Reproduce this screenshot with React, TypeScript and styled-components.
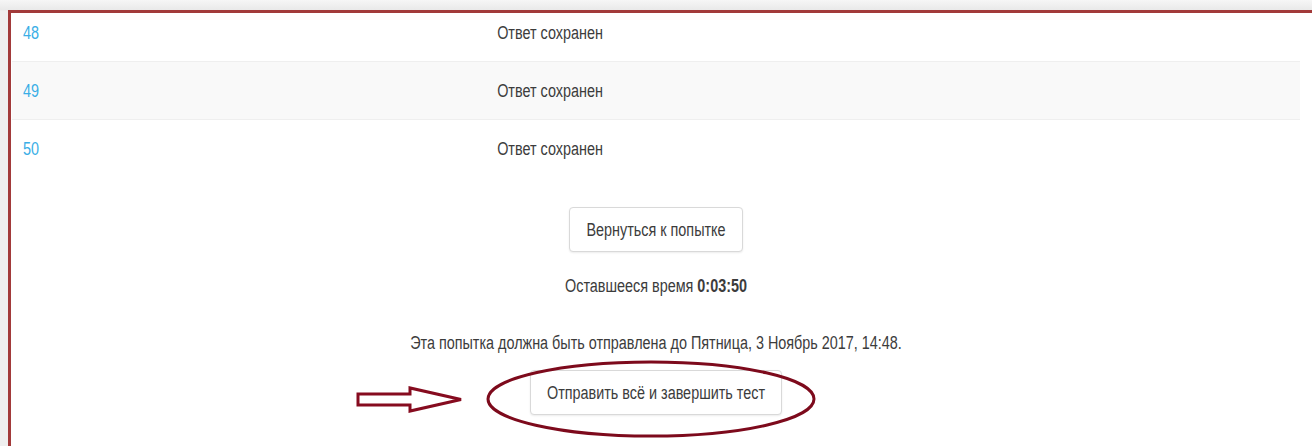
import React from 'react';
import styled, { createGlobalStyle } from 'styled-components';

const GlobalStyle = createGlobalStyle`
  html, body {
    margin: 0;
    padding: 0;
    background: #efefef;
    overflow: hidden;
  }
  body {
    font-family: 'Liberation Sans', Arial, sans-serif;
    font-size: 14.4px;
    color: #3c3c3c;
  }
`;

const Page = styled.div`
  position: relative;
  width: 1312px;
  height: 446px;
  background: linear-gradient(#f6f6f6, #e9e9e9 10px, #efefef 11px);
  overflow: hidden;
`;

const Frame = styled.div`
  margin: 10px 0 0 8px;
  height: 436px;
  background: #ffffff;
  border-top: 3px solid #a23a3a;
  border-left: 3px solid #a23a3a;
  overflow: hidden;
`;

const Content = styled.div`
  width: 1288px;
  padding-left: 1px;
`;

// the font is drawn tall and narrow
const Tall = styled.span`
  display: inline-block;
  transform: scaleY(1.26);
`;

const Table = styled.div`
  margin-top: -9px;
`;

const Row = styled.div<{ $striped?: boolean }>`
  display: grid;
  grid-template-columns: 300px 476px 1fr;
  align-items: center;
  height: 58px;
  background: ${(p) => (p.$striped ? '#f9f9f9' : '#ffffff')};
  border-bottom: 1px solid #efefef;
  box-sizing: border-box;

  &:last-child {
    border-bottom: none;
  }
`;

const Num = styled.a`
  padding-left: 11px;
  color: #3aaee6;
  text-decoration: none;
`;

const Status = styled.span`
  text-align: center;
  color: #3c3c3c;
`;

const Actions = styled.div`
  display: flex;
  flex-direction: column;
  align-items: center;
  padding-top: 29px;
`;

const Button = styled.button<{ $gap?: number }>`
  margin-top: ${(p) => p.$gap ?? 0}px;
  height: 45px;
  padding: 0 16px;
  background: #ffffff;
  border: 1px solid #d9d9d9;
  border-radius: 4px;
  box-shadow: 0 1px 2px rgba(0, 0, 0, 0.08);
  font-family: inherit;
  font-size: inherit;
  color: #3c3c3c;
  white-space: nowrap;
`;

const Note = styled.div<{ $gap: number }>`
  margin-top: ${(p) => p.$gap}px;
  line-height: 20px;
  color: #3c3c3c;
`;

const Overlay = styled.svg`
  position: absolute;
  left: 0;
  top: 0;
  pointer-events: none;
`;

const rows = [
  { n: 48, striped: false },
  { n: 49, striped: true },
  { n: 50, striped: false },
];

export default function App() {
  return (
    <>
      <GlobalStyle />
      <Page>
        <Frame>
          <Content>
            <Table>
              {rows.map((r) => (
                <Row key={r.n} $striped={r.striped}>
                  <Num href="#">
                    <Tall>{r.n}</Tall>
                  </Num>
                  <Status>
                    <Tall>Ответ сохранен</Tall>
                  </Status>
                  <span />
                </Row>
              ))}
            </Table>
            <Actions>
              <Button>
                <Tall>Вернуться к попытке</Tall>
              </Button>
              <Note $gap={24}>
                <Tall>
                  Оставшееся время <b>0:03:50</b>
                </Tall>
              </Note>
              <Note $gap={37}>
                <Tall>Эта попытка должна быть отправлена до Пятница, 3 Ноябрь 2017, 14:48.</Tall>
              </Note>
              <Button $gap={17}>
                <Tall>Отправить всё и завершить тест</Tall>
              </Button>
            </Actions>
          </Content>
        </Frame>
        <Overlay width="1312" height="446" viewBox="0 0 1312 446">
          {/* hollow arrow pointing at the submit button */}
          <polygon
            points="358,394 410,394 410,388 461,399.5 410,411 410,405 358,405"
            fill="#ffffff"
            stroke="#860b1f"
            strokeWidth="3"
            strokeLinejoin="miter"
          />
          {/* circle marking the submit button */}
          <ellipse
            cx="651"
            cy="399"
            rx="163"
            ry="37"
            fill="none"
            stroke="#7d0a1c"
            strokeWidth="3"
          />
        </Overlay>
      </Page>
    </>
  );
}
